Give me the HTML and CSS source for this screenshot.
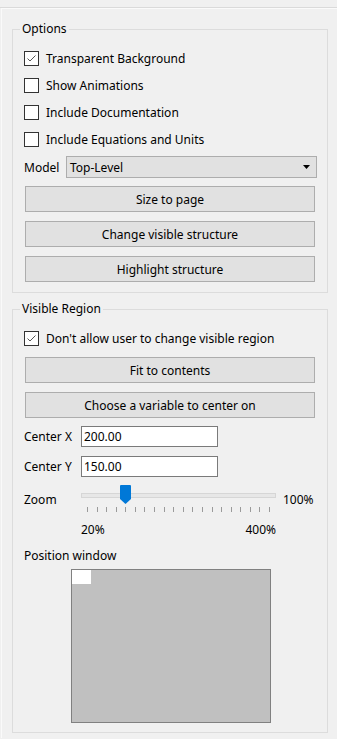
FILE: index.html
```html
<!DOCTYPE html>
<html lang="en">
<head>
  <meta charset="UTF-8">
  <title>Diagram Options</title>
  <link rel="stylesheet" href="styles.css">
</head>
<body>
  <div class="panel">
    <div class="panel-inner">
      <fieldset class="group group-options">
        <legend>Options</legend>
        <label class="check">
          <span class="box"><svg width="13" height="13" viewBox="0 0 13 13"><path d="M2.5 6.5 L5 9 L10.5 3.5" fill="none" stroke="#555" stroke-width="1"/></svg></span>
          Transparent Background
        </label>
        <label class="check"><span class="box"></span>Show Animations</label>
        <label class="check"><span class="box"></span>Include Documentation</label>
        <label class="check"><span class="box"></span>Include Equations and Units</label>
        <div class="model-row">
          <span class="model-label">Model</span>
          <div class="select">
            <span>Top-Level</span>
            <svg width="7" height="4" viewBox="0 0 7 4"><path d="M0 0 H7 L3.5 4 Z" fill="#000"/></svg>
          </div>
        </div>
        <button class="btn">Size to page</button>
        <button class="btn">Change visible structure</button>
        <button class="btn">Highlight structure</button>
      </fieldset>

      <fieldset class="group group-region">
        <legend>Visible Region</legend>
        <label class="check">
          <span class="box"><svg width="13" height="13" viewBox="0 0 13 13"><path d="M2.5 6.5 L5 9 L10.5 3.5" fill="none" stroke="#555" stroke-width="1"/></svg></span>
          Don't allow user to change visible region
        </label>
        <button class="btn btn-fit">Fit to contents</button>
        <button class="btn">Choose a variable to center on</button>
        <div class="field">
          <span class="field-label">Center X</span>
          <input class="num" type="text" value="200.00">
        </div>
        <div class="field">
          <span class="field-label">Center Y</span>
          <input class="num" type="text" value="150.00">
        </div>
        <div class="zoom-row">
          <span class="field-label">Zoom</span>
          <svg class="slider" width="195" height="28" viewBox="0 0 195 28">
            <rect x="0.5" y="8.5" width="194" height="4" fill="#e7e7e7" stroke="#d6d6d6"/>
            <g id="ticks" stroke="#9a9a9a"></g>
            <path d="M39 1 Q39 0 40 0 H49 Q50 0 50 1 V14 L44.5 19 L39 14 Z" fill="#0078d7"/>
          </svg>
          <span class="zoom-value">100%</span>
        </div>
        <div class="zoom-scale">
          <span>20%</span>
          <span>400%</span>
        </div>
        <div class="pos-label">Position window</div>
        <div class="pos-window">
          <div class="pos-view"></div>
        </div>
      </fieldset>
    </div>
  </div>

  <script>
    // slider tick marks
    var ticks = document.getElementById("ticks");
    for (var i = 0; i < 20; i++) {
      var x = Math.round(6 + i * 9.58) + 0.5;
      var line = document.createElementNS("http://www.w3.org/2000/svg", "line");
      line.setAttribute("x1", x);
      line.setAttribute("x2", x);
      line.setAttribute("y1", 22);
      line.setAttribute("y2", 27);
      ticks.appendChild(line);
    }
  </script>
</body>
</html>
```

FILE: styles.css
```css
body {
  margin: 0;
  background: #f0f0f0;
  font-family: "Noto Sans", "Open Sans", sans-serif;
  font-size: 12px;
  color: #000;
}
.panel {
  margin-top: 7px;
  border-top: 1px solid #dadada;
}
.panel-inner {
  margin-left: 1px;
  border-top: 1px solid #fafafa;
  border-left: 1px solid #fafafa;
  padding-top: 12px;
  height: 730px;
  box-sizing: border-box;
}
.group {
  margin: 0 9px 0 10px;
  border: 1px solid #dcdcdc;
  padding: 8px 10px 10px 11px;
  min-width: 0;
}
.group legend {
  padding: 0 2px;
  margin-left: -4px;
  line-height: 16px;
}
.group-region {
  margin-top: 8px;
  padding-bottom: 9px;
}
.check {
  display: flex;
  align-items: center;
  height: 27px;
  gap: 7px;
}
.box {
  width: 15px;
  height: 15px;
  box-sizing: border-box;
  border: 1px solid #333;
  background: #fff;
  display: flex;
  align-items: center;
  justify-content: center;
}
.model-row {
  display: flex;
  align-items: center;
  margin-top: 3px;
}
.model-label {
  width: 42px;
}
.select {
  flex: 1;
  height: 22px;
  box-sizing: border-box;
  border: 1px solid #adadad;
  background: #e1e1e1;
  display: flex;
  align-items: center;
  justify-content: space-between;
  padding: 0 6px 0 3px;
}
.btn {
  display: block;
  height: 26px;
  margin-top: 9px;
  margin-left: 1px;
  width: 290px;
  border: 1px solid #adadad;
  background: #e1e1e1;
  font-family: inherit;
  font-size: 12px;
  color: #000;
  padding: 0;
}
.group-options .btn:first-of-type {
  margin-top: 8px;
}
.btn-fit {
  margin-top: 5px;
}
.field {
  display: flex;
  align-items: center;
  margin-top: 8px;
}
.field + .field {
  margin-top: 9px;
}
.field-label {
  width: 57px;
  flex: none;
}
.num {
  width: 137px;
  height: 21px;
  box-sizing: border-box;
  border: 1px solid #7a7a7a;
  background: #fff;
  font-family: inherit;
  font-size: 12px;
  padding: 0 2px;
  margin: 0;
}
.zoom-row {
  display: flex;
  align-items: flex-start;
  margin-top: 8px;
}
.zoom-row .field-label,
.zoom-value {
  line-height: 16px;
  margin-top: 7px;
}
.slider {
  display: block;
  flex: none;
}
.zoom-value {
  margin-left: 7px;
}
.zoom-scale {
  display: flex;
  justify-content: space-between;
  width: 195px;
  margin-left: 57px;
  margin-top: 9px;
  line-height: 16px;
}
.pos-label {
  line-height: 16px;
  margin-top: 10px;
}
.pos-window {
  width: 200px;
  height: 154px;
  box-sizing: border-box;
  margin: 5px auto 0;
  border: 1px solid #808080;
  background: #c0c0c0;
}
.pos-view {
  width: 19px;
  height: 14px;
  background: #fff;
}
```
